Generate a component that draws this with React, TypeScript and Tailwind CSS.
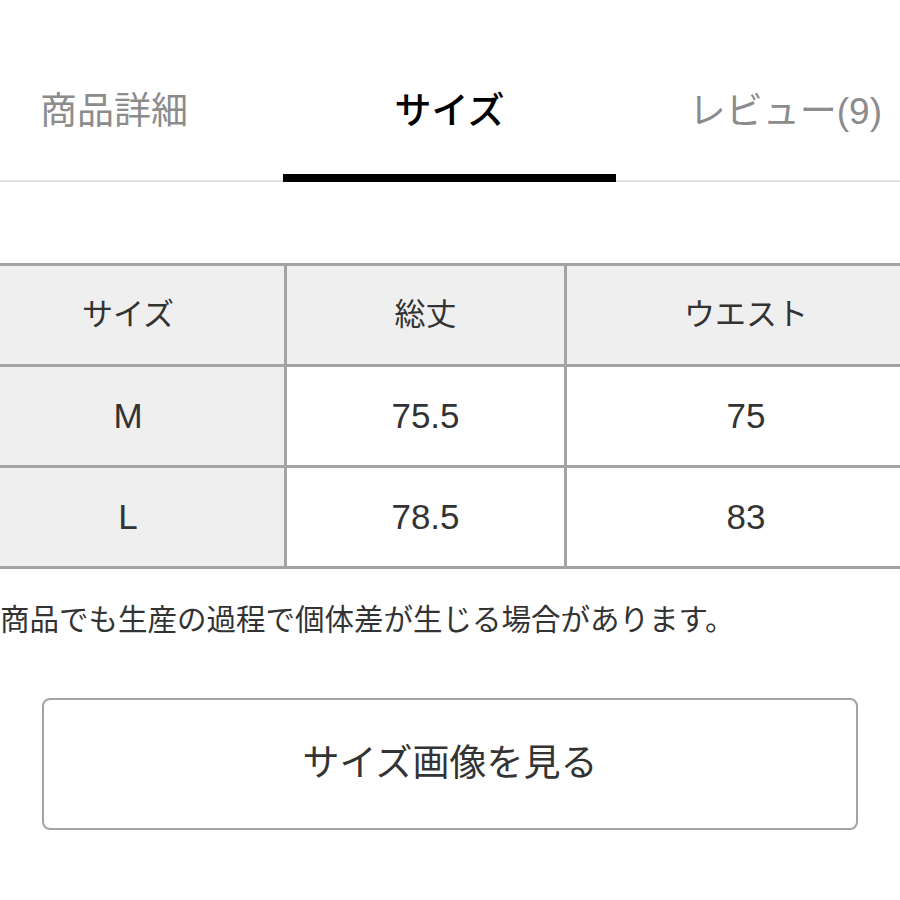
import React from "react";

const rows = [
  { size: "M", length: "75.5", waist: "75" },
  { size: "L", length: "78.5", waist: "83" },
];

const font = { fontFamily: '"Liberation Sans", "Noto Sans CJK JP", sans-serif' };

export default function App() {
  return (
    <div className="w-[900px] h-[900px] bg-white overflow-hidden text-[#333]" style={font}>
      {/* Tabs */}
      <div className="flex h-[182px] border-b-2 border-[#e2e2e2]">
        <div className="w-[283px] pl-[40px] pt-[90px]">
          <span className="text-[37px] leading-[44px] text-[#8c8c8c] whitespace-nowrap">商品詳細</span>
        </div>
        <div className="w-[333px] h-[182px] -mb-[2px] pt-[90px] border-b-[8px] border-black flex justify-center">
          <span className="text-[37px] leading-[44px] font-medium text-black whitespace-nowrap">サイズ</span>
        </div>
        <div className="flex-1 pr-[18px] pt-[90px] flex justify-end">
          <span className="text-[37px] leading-[44px] text-[#8c8c8c] whitespace-nowrap">レビュー(9)</span>
        </div>
      </div>

      {/* Size table */}
      <div className="mt-[81px] ml-[-28px] w-[953px] grid grid-cols-[312px_277px_358px] gap-[3px] py-[3px] bg-[#a3a3a3]">
        <div className="h-[98px] bg-[#efefef] flex items-center justify-center text-[31px]">サイズ</div>
        <div className="h-[98px] bg-[#efefef] flex items-center justify-center text-[31px]">総丈</div>
        <div className="h-[98px] bg-[#efefef] flex items-center justify-center text-[31px]">ウエスト</div>
        {rows.map((r) => (
          <React.Fragment key={r.size}>
            <div className="h-[98px] bg-[#efefef] flex items-center justify-center text-[35px]">{r.size}</div>
            <div className="h-[98px] bg-white flex items-center justify-center text-[35px]">{r.length}</div>
            <div className="h-[98px] bg-white flex items-center justify-center text-[35px]">{r.waist}</div>
          </React.Fragment>
        ))}
      </div>

      <p className="mt-[31px] text-[29.5px] leading-[40px] whitespace-nowrap">
        商品でも生産の過程で個体差が生じる場合があります。
      </p>

      <div className="px-[42px] mt-[58px]">
        <button className="w-full h-[132px] border-2 border-[#a3a3a3] rounded-[8px] bg-white flex items-center justify-center text-[37px] text-[#333]">
          サイズ画像を見る
        </button>
      </div>
    </div>
  );
}
